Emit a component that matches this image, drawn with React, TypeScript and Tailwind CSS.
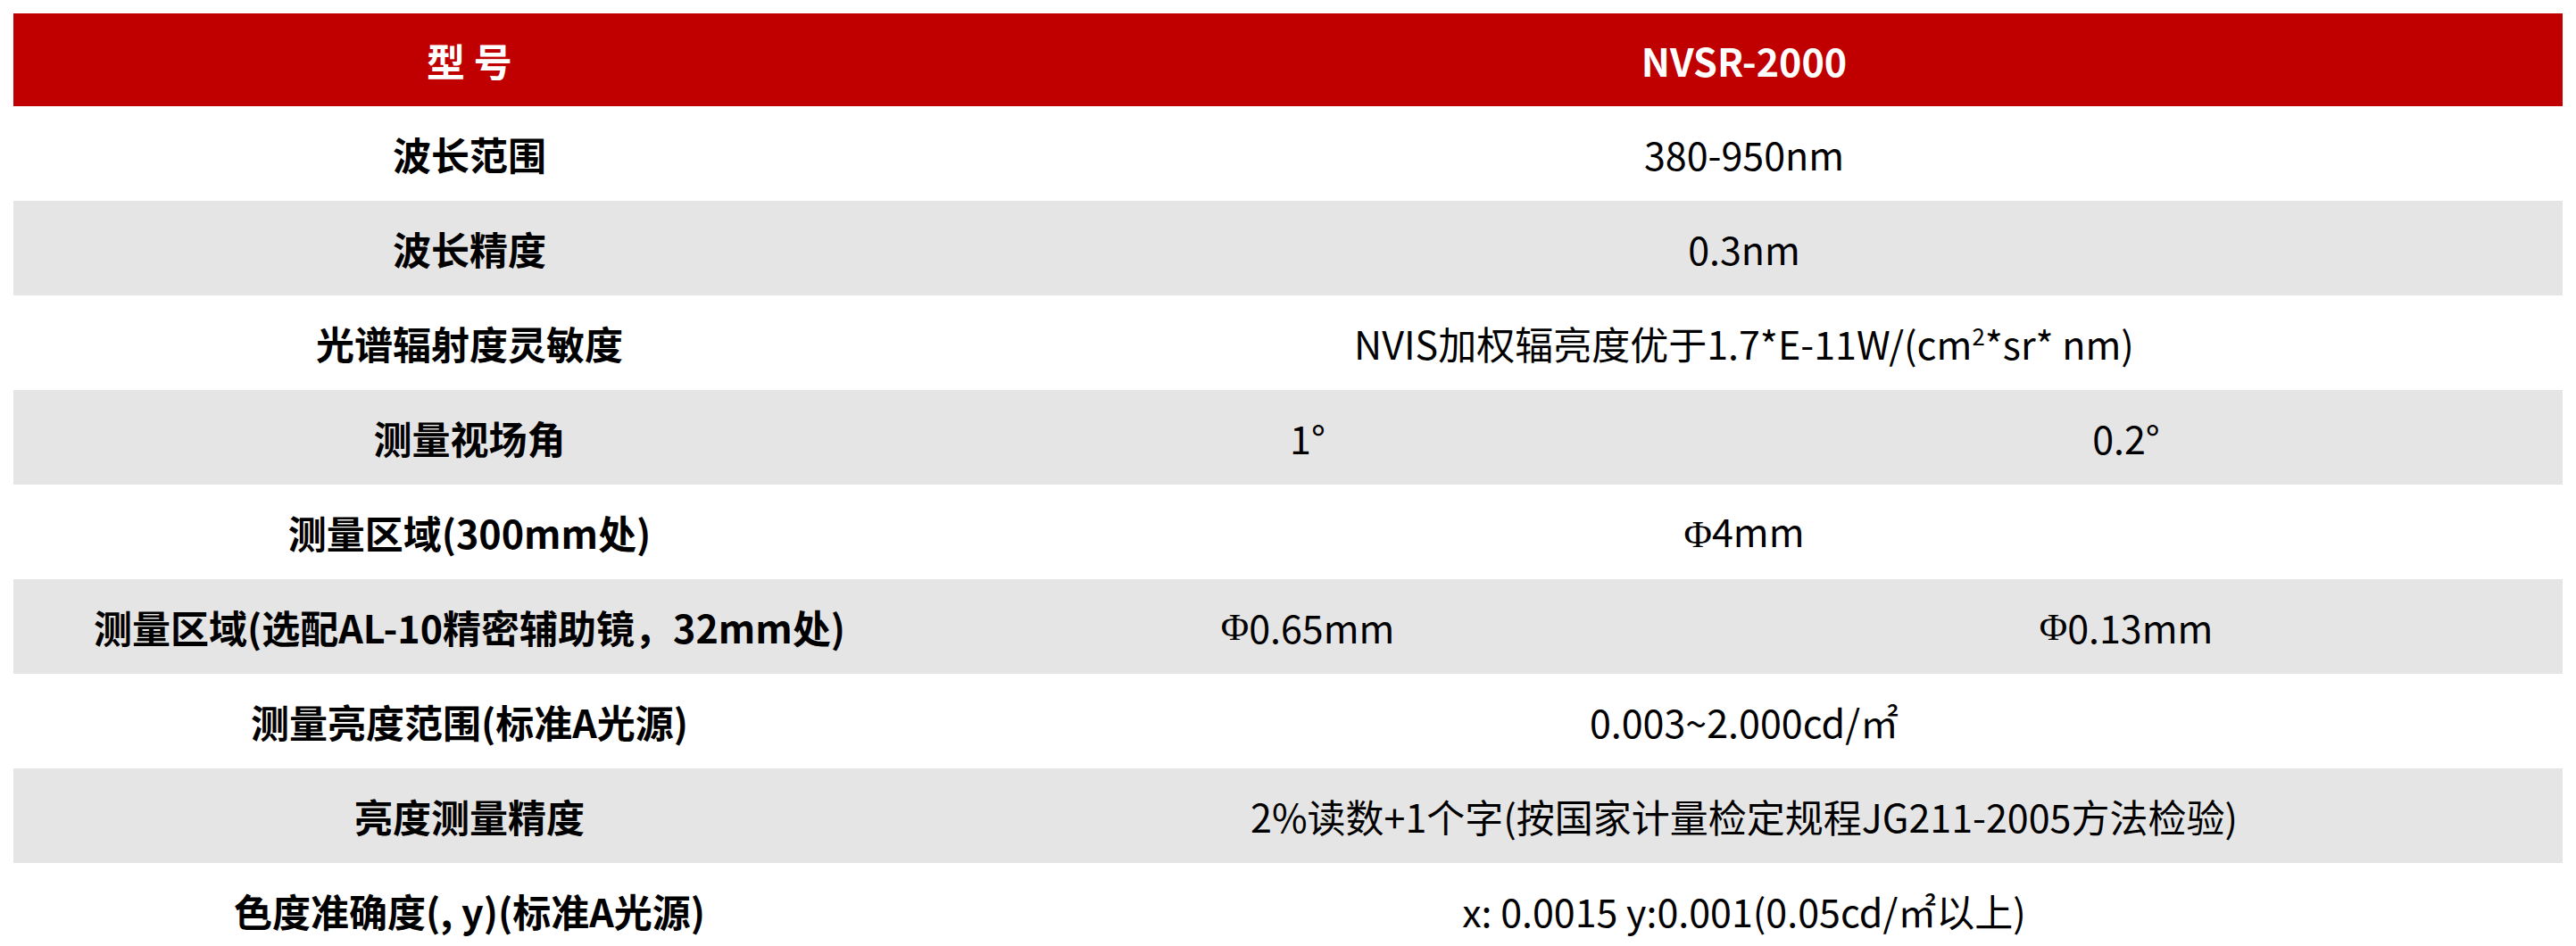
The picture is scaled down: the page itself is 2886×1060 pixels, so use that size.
import type { ReactNode } from 'react';

type Row = {
  label: string;
  value?: ReactNode;
  split?: [ReactNode, ReactNode];
};

const Phi = () => <span className="font-['Liberation_Serif',serif]">Φ</span>;

const rows: Row[] = [
  { label: '波长范围', value: '380-950nm' },
  { label: '波长精度', value: '0.3nm' },
  {
    label: '光谱辐射度灵敏度',
    value: (
      <>
        NVIS加权辐亮度优于1.7*E-11W/(cm<sup className="text-[0.6em] -top-[0.6em]">2</sup>*sr* nm)
      </>
    ),
  },
  { label: '测量视场角', split: ['1°', '0.2°'] },
  {
    label: '测量区域(300mm处)',
    value: (
      <>
        <Phi />4mm
      </>
    ),
  },
  {
    label: '测量区域(选配AL-10精密辅助镜，32mm处)',
    split: [
      <>
        <Phi />0.65mm
      </>,
      <>
        <Phi />0.13mm
      </>,
    ],
  },
  { label: '测量亮度范围(标准A光源)', value: '0.003~2.000cd/㎡' },
  { label: '亮度测量精度', value: '2%读数+1个字(按国家计量检定规程JG211-2005方法检验)' },
  { label: '色度准确度(, y)(标准A光源)', value: 'x: 0.0015 y:0.001(0.05cd/㎡以上)' },
];

export default function App() {
  return (
    <div className="min-h-screen bg-white px-[15px] pt-[15px] font-['Noto_Sans_CJK_SC','Noto_Sans',sans-serif] text-[43px] leading-none text-black">
      <div className="grid w-[2856px] grid-cols-[1022px_856px_978px]">
        {/* Header */}
        <div className="flex h-[104px] items-center justify-center bg-[#c00000] font-bold text-white">
          型 号
        </div>
        <div className="col-span-2 flex h-[104px] items-center justify-center bg-[#c00000] font-bold text-white">
          NVSR-2000
        </div>

        {rows.map((row, i) => {
          const bg = i % 2 === 1 ? 'bg-[#e5e5e5]' : 'bg-white';
          return (
            <div key={row.label} className="contents">
              <div className={`flex h-[106px] items-center justify-center font-bold ${bg}`}>
                {row.label}
              </div>
              {row.split ? (
                <>
                  <div className={`flex h-[106px] items-center justify-center ${bg}`}>{row.split[0]}</div>
                  <div className={`flex h-[106px] items-center justify-center ${bg}`}>{row.split[1]}</div>
                </>
              ) : (
                <div className={`col-span-2 flex h-[106px] items-center justify-center ${bg}`}>
                  <span>{row.value}</span>
                </div>
              )}
            </div>
          );
        })}
      </div>
    </div>
  );
}
